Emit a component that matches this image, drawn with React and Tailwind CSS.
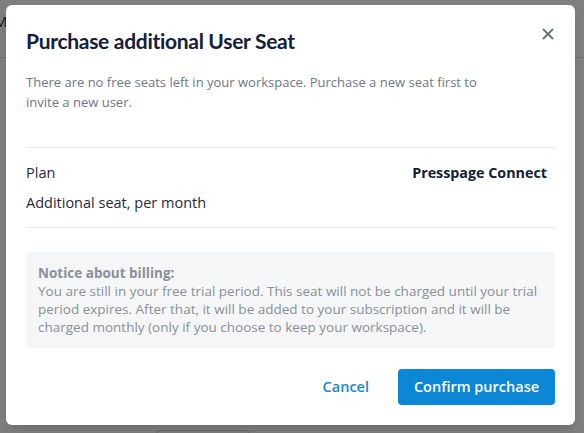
import { X } from 'lucide-react'

export default function App() {
  return (
    <div className="relative h-[433px] w-[584px] overflow-hidden bg-white" style={{ fontFamily: '"Open Sans", sans-serif' }}>
      {/* page behind the dialog */}
      <div className="h-[58px] border-b border-[#dcdcdc] pt-[9px]">
        <span className="-ml-[6px] text-[15px] text-[#333]">Members</span>
      </div>
      <div className="mt-[372px] ml-[156px] h-[20px] w-[94px] rounded border border-[#cfcfcf]" />

      {/* overlay */}
      <div className="absolute inset-0 bg-black/50">
        <div className="mt-[5px] ml-[6px] w-[569px] rounded-md bg-white p-5 shadow-lg">
          <div className="flex items-start justify-between">
            <h2
              className="pt-[2px] text-[21px] font-bold leading-7 tracking-[-0.3px] text-[#142039]"
              style={{ fontFamily: 'Lato, sans-serif' }}
            >
              Purchase additional User Seat
            </h2>
            <button className="-mr-[2px] text-[#6b7280]">
              <X size={18} strokeWidth={2.5} />
            </button>
          </div>

          <p className="mt-[17px] max-w-[470px] text-[13px] leading-5 text-[#6e7888]">
            There are no free seats left in your workspace. Purchase a new seat first to invite a new user.
          </p>

          <div className="mt-[35px] flex flex-col gap-[10px] border-y border-[#e8eaed] pt-[15px] pb-[14px] text-[14.5px] leading-5 text-[#1f2a3c]">
            <div className="flex items-center justify-between pr-2">
              <span>Plan</span>
              <span className="text-[14.3px] font-bold text-[#142039]">Presspage Connect</span>
            </div>
            <div>Additional seat, per month</div>
          </div>

          <div className="mt-6 rounded bg-[#f5f6f8] p-3 text-[13.5px] leading-[18px] text-[#8a9099]">
            <p className="font-bold">Notice about billing:</p>
            <p>
              You are still in your free trial period. This seat will not be charged until your trial period
              expires. After that, it will be added to your subscription and it will be charged monthly (only if
              you choose to keep your workspace).
            </p>
          </div>

          <div className="mt-[21px] flex items-center justify-end gap-[17px]">
            <button className="px-3 text-[14.5px] font-semibold text-[#1a86cf]">Cancel</button>
            <button className="h-9 w-[157px] rounded bg-[#0b87d6] text-[14.5px] font-semibold text-white">
              Confirm purchase
            </button>
          </div>
        </div>
      </div>
    </div>
  )
}
